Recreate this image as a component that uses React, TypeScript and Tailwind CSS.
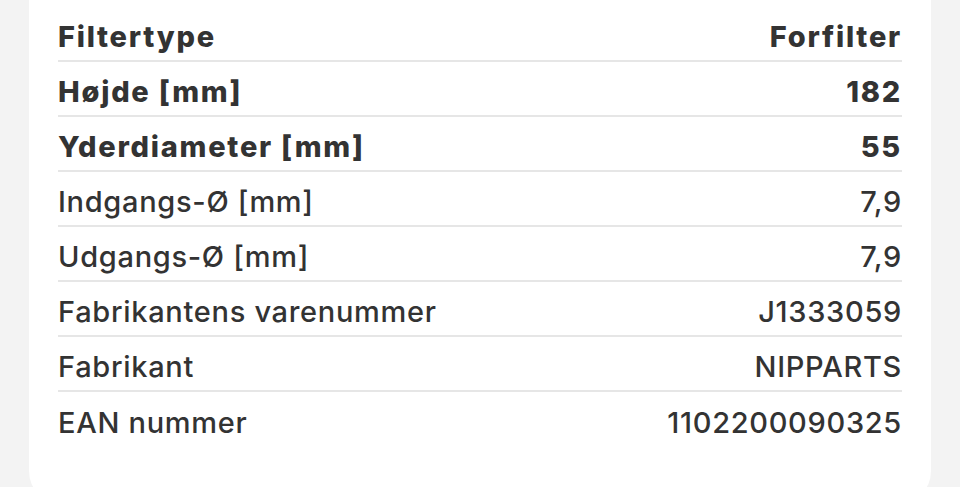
import React from 'react';

// Product specification rows
const SPECS = [
  { label: 'Filtertype', value: 'Forfilter', bold: true },
  { label: 'Højde [mm]', value: '182', bold: true },
  { label: 'Yderdiameter [mm]', value: '55', bold: true },
  { label: 'Indgangs-Ø [mm]', value: '7,9', bold: false },
  { label: 'Udgangs-Ø [mm]', value: '7,9', bold: false },
  { label: 'Fabrikantens varenummer', value: 'J1333059', bold: false },
  { label: 'Fabrikant', value: 'NIPPARTS', bold: false },
  { label: 'EAN nummer', value: '1102200090325', bold: false }
];

const SpecRow: React.FC<{ label: string; value: string; bold: boolean; last: boolean }> = ({
  label,
  value,
  bold,
  last
}) => (
  <div
    className={`flex items-center justify-between h-[55px] pt-[6px] text-[29px] text-[#333333] ${
      bold ? 'font-extrabold tracking-[1.75px]' : 'font-medium tracking-[0.7px]'
    } ${last ? '' : 'border-b-2 border-[#e6e6e6]'}`}
  >
    <span>{label}</span>
    <span>{value}</span>
  </div>
);

const App: React.FC = () => {
  return (
    <div className="min-h-screen bg-[#f3f3f3] pl-[29px] pr-[29px] font-['Inter',_'Noto_Sans',_sans-serif]">
      <div className="bg-white rounded-b-[34px] px-[29px] pt-[7px] h-[505px]">
        {SPECS.map((spec, i) => (
          <SpecRow key={spec.label} {...spec} last={i === SPECS.length - 1} />
        ))}
      </div>
    </div>
  );
};

export default App;
